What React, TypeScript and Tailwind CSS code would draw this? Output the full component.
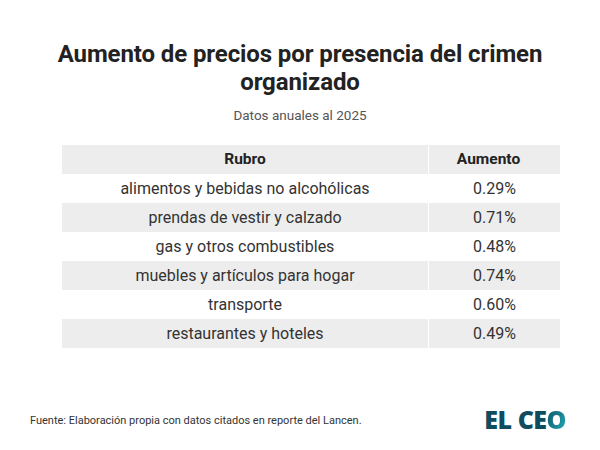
const rows = [
  ["alimentos y bebidas no alcohólicas", "0.29%"],
  ["prendas de vestir y calzado", "0.71%"],
  ["gas y otros combustibles", "0.48%"],
  ["muebles y artículos para hogar", "0.74%"],
  ["transporte", "0.60%"],
  ["restaurantes y hoteles", "0.49%"],
];

export default function App() {
  return (
    <div className="w-[600px] h-[450px] bg-white flex flex-col font-['Roboto',sans-serif] text-[#333]">
      <div className="pt-[40px] px-10 text-center">
        <h1 className="text-[24px] leading-[28px] font-bold text-[#222] tracking-[-0.1px]">
          Aumento de precios por presencia del crimen organizado
        </h1>
        <p className="mt-[11px] text-[13.5px] leading-4 text-[#555]">Datos anuales al 2025</p>
      </div>
      <div className="mx-[62px] mt-[22px] w-[498px] text-[16px]">
        <div className="flex h-[29px] bg-[#ededed] font-bold text-[15.5px] text-[#222]">
          <div className="flex-1 flex items-center justify-center border-r border-white">Rubro</div>
          <div className="w-[131px] flex items-center justify-center pr-[12px]">Aumento</div>
        </div>
        {rows.map(([r, v], i) => (
          <div key={r} className={`flex h-[29px] ${i % 2 === 1 ? "bg-[#ededed]" : "bg-white"}`}>
            <div className="flex-1 flex items-center justify-center border-r border-white">{r}</div>
            <div className="w-[131px] flex items-center justify-center">{v}</div>
          </div>
        ))}
      </div>
      <div className="mt-auto mb-[18px] pl-[30px] pr-[34px] flex items-end justify-between">
        <p className="text-[11px] text-[#333] mb-[3px]">
          Fuente: Elaboración propia con datos citados en reporte del Lancen.
        </p>
        <div className="font-['Open_Sans',sans-serif] font-extrabold text-[25px] leading-none tracking-[-0.5px] text-[#0f4c5f]">
          EL CE
          <span className="bg-gradient-to-br from-[#0f4c5f] to-[#22b3c0] bg-clip-text text-transparent">O</span>
        </div>
      </div>
    </div>
  );
}
